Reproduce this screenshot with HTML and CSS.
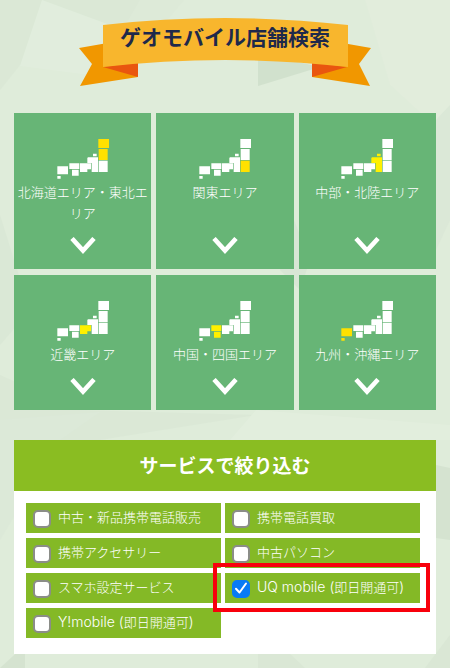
FILE: index.html
```html
<!DOCTYPE html>
<html lang="ja">
<head>
<meta charset="utf-8">
<meta name="viewport" content="width=device-width, initial-scale=1">
<title>ゲオモバイル店舗検索</title>
<link rel="stylesheet" href="styles.css">
</head>
<body>
<svg class="backdrop" viewBox="0 0 450 668" preserveAspectRatio="none" aria-hidden="true">
  <path fill="#d9e7d5" d="M0 0H180L120 25 88 75 20 65 0 90Z"/>
  <path fill="#e3efdf" d="M42 0 20 66 88 75 118 28Z"/>
  <path fill="#dde9d8" d="M140 0H184L150 40 92 82Z"/>
  <path fill="#c9dac5" d="M258 53 320 67 258 86Z"/>
  <path fill="#e4eede" d="M365 0H450V140L390 85Z"/>
  <path fill="#d8e6d4" d="M0 215 14 260 30 310 0 345Z"/>
  <path fill="#d9e6d6" d="M436 120 450 105V220L436 250Z"/>
  <path fill="#d5e3d2" d="M290 210 310 260 300 290 280 270Z"/>
  <path fill="#d9e7d5" d="M0 375 80 410 256 415 100 440 0 460Z"/>
  <path fill="#e5f0e0" d="M256 410 450 425V440H230Z"/>
  <path fill="#dbe8d8" d="M0 420 100 412 60 440 0 540Z"/>
  <path fill="#cfdecb" d="M436 465 450 468V540L436 538Z"/>
  <path fill="#cfdecb" d="M0 668 25 645V668Z"/>
  <path fill="#d7e5d3" d="M258 654H290L305 668H258ZM425 668 450 635V668Z"/>
</svg>

<!-- Shared drawings -->
<svg class="defs" aria-hidden="true">
  <symbol id="japan" viewBox="0 0 156 120">
    <path class="hokkaido" d="M124 0H156V27H124Z"/>
    <path class="tohoku" d="M125 30H152V63H125Z"/>
    <path class="kanto" d="M125 65H152V99H125Z"/>
    <path class="chubu" d="M108 44H119V52H108ZM93 55H123V99H104V72H91V57Z"/>
    <path class="kinki" d="M69 73H102V91H91V99H69Z"/>
    <path class="chugoku" d="M37 73H67V90H37ZM45 92H65V110H45Z"/>
    <path class="kyushu" d="M1 82H33V106H1ZM1 111H11V119H1Z"/>
  </symbol>
  <symbol id="chevron" viewBox="0 0 26 17">
    <path fill="none" stroke="#fff" stroke-width="4.6" d="M2 1.5 13 13.5 24 1.5"/>
  </symbol>
</svg>

<main class="page">
  <h1 class="ribbon">
    <svg class="ribbon-art" viewBox="0 0 292 68" aria-hidden="true">
      <path fill="#f19700" d="M0 30 40 23 59 59 1 68 13 46ZM292 30 252 23 233 59 291 68 280 46Z"/>
      <path fill="#e9560f" d="M24 49 59 44V59ZM268 49 233 44V59Z"/>
      <path fill="#f8b62d" d="M24 7Q146-7 269 7V49Q146 35 24 49Z"/>
    </svg>
    <span class="ribbon-text">ゲオモバイル店舗検索</span>
  </h1>

  <nav class="areas" aria-label="エリア">
    <button class="area is-hokkaido" type="button"><svg class="map"><use href="#japan"/></svg><span class="area-name">北海道エリア・東北エリア</span><svg class="chevron"><use href="#chevron"/></svg></button>
    <button class="area is-kanto" type="button"><svg class="map"><use href="#japan"/></svg><span class="area-name">関東エリア</span><svg class="chevron"><use href="#chevron"/></svg></button>
    <button class="area is-chubu" type="button"><svg class="map"><use href="#japan"/></svg><span class="area-name">中部・北陸エリア</span><svg class="chevron"><use href="#chevron"/></svg></button>
    <button class="area is-kinki" type="button"><svg class="map"><use href="#japan"/></svg><span class="area-name">近畿エリア</span><svg class="chevron"><use href="#chevron"/></svg></button>
    <button class="area is-chugoku" type="button"><svg class="map"><use href="#japan"/></svg><span class="area-name">中国・四国エリア</span><svg class="chevron"><use href="#chevron"/></svg></button>
    <button class="area is-kyushu" type="button"><svg class="map"><use href="#japan"/></svg><span class="area-name">九州・沖縄エリア</span><svg class="chevron"><use href="#chevron"/></svg></button>
  </nav>

  <section class="filter">
    <h2 class="filter-title">サービスで絞り込む</h2>
    <form class="services">
      <label class="service"><input type="checkbox"><span class="service-name">中古・新品携帯電話販売</span></label>
      <label class="service"><input type="checkbox"><span class="service-name">携帯電話買取</span></label>
      <label class="service"><input type="checkbox"><span class="service-name">携帯アクセサリー</span></label>
      <label class="service"><input type="checkbox"><span class="service-name">中古パソコン</span></label>
      <label class="service"><input type="checkbox"><span class="service-name">スマホ設定サービス</span></label>
      <label class="service is-marked"><input type="checkbox" checked><span class="service-name"><span class="latin">UQ mobile (</span>即日開通可<span class="latin">)</span></span><svg class="tick" viewBox="0 0 18 18" aria-hidden="true"><path fill="none" stroke="#fff" stroke-width="2" stroke-linecap="round" stroke-linejoin="round" d="M4 9.8 7.5 13.5 14 4.5"/></svg></label>
      <label class="service"><input type="checkbox"><span class="service-name"><span class="latin">Y!mobile (</span>即日開通可<span class="latin">)</span></span></label>
    </form>
  </section>
</main>
</body>
</html>
```

FILE: styles.css
```css
* {
  box-sizing: border-box;
}

body {
  position: relative;
  margin: 0;
  min-height: 100vh;
  background: #dfecda;
  font-family: Inter, "Noto Sans CJK JP", sans-serif;
  font-size: 13px;
  font-weight: 300;
  line-height: 21px;
}

.backdrop {
  position: absolute;
  inset: 0;
  width: 100%;
  height: 100%;
  opacity: 0.6;
  z-index: -1;
}

.defs {
  position: absolute;
  width: 0;
  height: 0;
}

.page {
  padding: 18px 14px 14px;
}

/* Title ribbon */
.ribbon {
  display: grid;
  justify-content: center;
  margin: 0 0 27px;
  color: #1e294b;
  font-size: 21px;
  font-weight: 700;
  line-height: 24px;
  text-align: center;
}

.ribbon-art,
.ribbon-text {
  grid-area: 1 / 1;
}

.ribbon-art {
  display: block;
  width: 292px;
  height: 68px;
}

.ribbon-text {
  padding-top: 8px;
}

/* Area cards */
.areas {
  display: grid;
  grid-template-columns: repeat(3, 1fr);
  gap: 6px 5px;
}

.area {
  display: flex;
  flex-direction: column;
  align-items: center;
  padding: 26px 2px 15px;
  border: 0;
  background: #67b576;
  color: #fff;
  font: inherit;
  cursor: pointer;
}

.map {
  width: 52px;
  height: 40px;
  margin-bottom: 3px;
  fill: #fff;
}

.area-name {
  margin-bottom: 13px;
}

.chevron {
  width: 26px;
  height: 17px;
  margin-top: auto;
}

.hokkaido { fill: var(--hokkaido, #fff); }
.tohoku { fill: var(--hokkaido, #fff); }
.kanto { fill: var(--kanto, #fff); }
.chubu { fill: var(--chubu, #fff); }
.kinki { fill: var(--kinki, #fff); }
.chugoku { fill: var(--chugoku, #fff); }
.kyushu { fill: var(--kyushu, #fff); }

.is-hokkaido { --hokkaido: #ffe100; }
.is-kanto { --kanto: #ffe100; }
.is-chubu { --chubu: #fff000; }
.is-kinki { --kinki: #fff000; }
.is-chugoku { --chugoku: #fff000; }
.is-kyushu { --kyushu: #ffe100; }

/* Service filter */
.filter {
  margin-top: 30px;
  background: #fff;
}

.filter-title {
  margin: 0;
  padding: 14px 13px 12px;
  background: #8abd22;
  color: #fff;
  font-size: 19px;
  font-weight: 700;
  line-height: 25px;
  text-align: center;
}

.services {
  display: grid;
  grid-template-columns: 1fr 1fr;
  gap: 5px 4px;
  padding: 12px 16px 16px 12px;
}

.service {
  position: relative;
  display: flex;
  align-items: center;
  gap: 7px;
  height: 30px;
  padding-left: 7px;
  background: #84b926;
  color: #fff;
  cursor: pointer;
}

.service-name {
  padding-bottom: 2px;
}

.latin {
  font-size: 14px;
}

.service input {
  appearance: none;
  flex: none;
  width: 18px;
  height: 18px;
  margin: 1px 0 0;
  border: 2px solid #8b8d88;
  border-radius: 5px;
  background: #fff;
}

.service input:checked {
  border-color: #087bf5;
  background: #087bf5;
}

.tick {
  position: absolute;
  top: 6px;
  left: 7px;
  width: 18px;
  height: 18px;
  pointer-events: none;
}

.service input:not(:checked) ~ .tick {
  display: none;
}

/* Highlight frame around the chosen service */
.is-marked::after {
  content: "";
  position: absolute;
  inset: -10px -10px -9px -12px;
  border: 4px solid #f8000c;
  pointer-events: none;
  z-index: 1;
}
```
